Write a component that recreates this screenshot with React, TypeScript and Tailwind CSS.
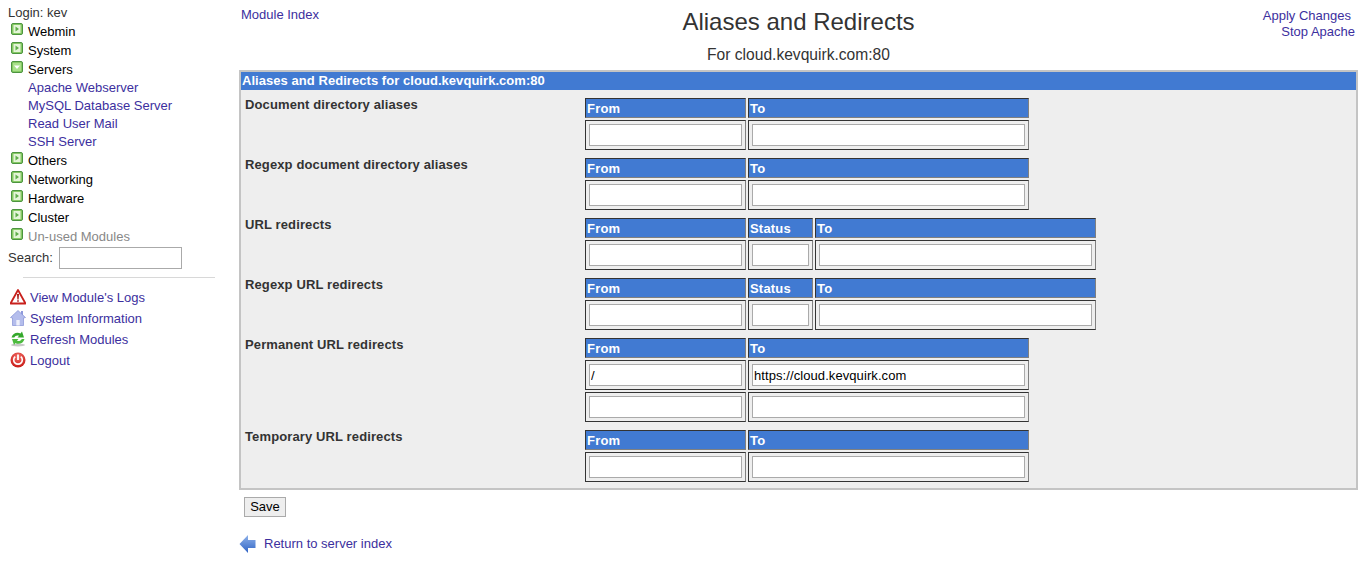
import type { ReactNode } from 'react'

type Section = { label: string; kind: 'pair' | 'triple'; rows: string[][] }

const sections: Section[] = [
  { label: 'Document directory aliases', kind: 'pair', rows: [['', '']] },
  { label: 'Regexp document directory aliases', kind: 'pair', rows: [['', '']] },
  { label: 'URL redirects', kind: 'triple', rows: [['', '', '']] },
  { label: 'Regexp URL redirects', kind: 'triple', rows: [['', '', '']] },
  {
    label: 'Permanent URL redirects',
    kind: 'pair',
    rows: [
      ['/', 'https://cloud.kevquirk.com'],
      ['', ''],
    ],
  },
  { label: 'Temporary URL redirects', kind: 'pair', rows: [['', '']] },
]

const Toggle = ({ open = false }: { open?: boolean }) => (
  <svg className="ml-[11px] mr-[5px] mt-[-6px] shrink-0" width="12" height="12" viewBox="0 0 12 12">
    <rect x="0.5" y="0.5" width="11" height="11" rx="1.5" fill="#86c964" stroke="#4c9440" />
    {open ? (
      <>
        <rect x="2" y="2" width="8" height="8" fill="#a8e08a" />
        <path d="M3 4.5h6L6 8z" fill="#ffffff" />
      </>
    ) : (
      <>
        <rect x="2.5" y="2" width="7" height="8" fill="#e4f5d8" />
        <path d="M4.5 3.5v5L8 6z" fill="#5fae4a" />
      </>
    )}
  </svg>
)

const Category = ({ name, open, muted }: { name: string; open?: boolean; muted?: boolean }) => (
  <div className={`flex h-[19px] items-center ${muted ? 'text-[#888888]' : 'text-black'}`}>
    <Toggle open={open} />
    {name}
  </div>
)

const SubLink = ({ name }: { name: string }) => (
  <a className="block h-[18px] pl-[28px] leading-[18px] text-[#3c2f9e]">{name}</a>
)

const ActionLink = ({ icon, name }: { icon: ReactNode; name: string }) => (
  <a className="flex h-[21px] items-center text-[#3c2f9e]">
    <span className="ml-[10px] mr-[4px] flex h-4 w-4 shrink-0 -translate-y-[1px] items-center justify-center">{icon}</span>
    {name}
  </a>
)

const Sidebar = () => (
  <aside className="w-[239px] shrink-0 pt-[4px] text-[13px] leading-[18px]">
    <div className="h-[18px] pl-[8px] text-[#333333]">Login: kev</div>
    <Category name="Webmin" />
    <Category name="System" />
    <Category name="Servers" open />
    <SubLink name="Apache Webserver" />
    <SubLink name="MySQL Database Server" />
    <SubLink name="Read User Mail" />
    <SubLink name="SSH Server" />
    <Category name="Others" />
    <Category name="Networking" />
    <Category name="Hardware" />
    <Category name="Cluster" />
    <Category name="Un-used Modules" muted />
    <div className="mt-[1px] flex h-[22px] items-center pl-[8px] text-[#333333]">
      Search:
      <input className="ml-[6px] h-[22px] w-[123px] border border-[#aaaaaa] bg-white" />
    </div>
    <hr className="ml-[23px] mt-[8px] w-[192px] border-0 border-t border-[#d8d8d8]" />
    <div className="mt-[9px]">
      <ActionLink
        name="View Module's Logs"
        icon={
          <svg width="16" height="16" viewBox="0 0 16 16">
            <path d="M8 1L15.5 14.5H.5z" fill="#fff" stroke="#c8201c" strokeWidth="1.8" strokeLinejoin="round" />
            <path d="M7 5h2L8.6 10.5H7.4zM7.2 11.2h1.6v1.6H7.2z" fill="#a81a18" />
          </svg>
        }
      />
      <ActionLink
        name="System Information"
        icon={
          <svg width="16" height="16" viewBox="0 0 16 16">
            <rect x="11" y="1" width="2" height="4" fill="#8f9bdc" />
            <path d="M8 .5L15.5 7.5 13.5 8V15.5H2.500V8L.5 7.5z" fill="#b4bdec" stroke="#8491d6" strokeWidth="0.7" />
            <path d="M6.300 15.500V10h3.400v5.500z" fill="#eef0fb" />
          </svg>
        }
      />
      <ActionLink
        name="Refresh Modules"
        icon={
          <svg width="16" height="16" viewBox="0 0 16 16">
            <ellipse cx="8" cy="14" rx="7" ry="1.500" fill="#c8c8c8" />
            <path d="M1.500 6.500C2.500 2 7.500 .5 10.500 2.500L12 .5 14 6.500H7.500L9 4.700C7 4 5 4.700 4.300 6.500z" fill="#35a82c" />
            <path d="M14.500 8C13.500 12.500 8.500 14 5.500 12L4 14 2 8H8.500L7 9.800C9 10.500 11 9.800 11.700 8z" fill="#4cbb3e" />
          </svg>
        }
      />
      <ActionLink
        name="Logout"
        icon={
          <svg width="16" height="16" viewBox="0 0 16 16">
            <defs>
              <radialGradient id="logoutFill" cx="50%" cy="30%" r="75%">
                <stop offset="0%" stopColor="#f4706a" />
                <stop offset="100%" stopColor="#c4140f" />
              </radialGradient>
            </defs>
            <circle cx="8" cy="8" r="7.500" fill="url(#logoutFill)" />
            <path d="M5.200 4.600A4.300 4.300 0 1 0 10.800 4.600" fill="none" stroke="#fff" strokeWidth="1.600" />
            <path d="M8 2.500V8" stroke="#fff" strokeWidth="1.800" />
          </svg>
        }
      />
    </div>
  </aside>
)

const HeaderCell = ({ title }: { title: string }) => (
  <div className="h-[20px] border border-t-[#333333] border-l-[#333333] border-r-[#808080] border-b-[#808080] bg-[#417ad2] pl-[1px] text-[13px] font-bold leading-[19px] tracking-[0.2px] text-white">
    {title}
  </div>
)

const InputCell = ({ value }: { value: string }) => (
  <div className="h-[30px] border border-t-[#333333] border-l-[#333333] border-r-[#808080] border-b-[#333333] bg-[#eeeeee] p-[3px]">
    <input
      readOnly
      value={value}
      className="block h-[22px] w-full border border-[#aaaaaa] bg-white pl-[1px] text-[13px] tracking-[0.08px] text-black"
    />
  </div>
)

const SubTable = ({ section }: { section: Section }) => {
  const isTriple = section.kind === 'triple'
  const titles = isTriple ? ['From', 'Status', 'To'] : ['From', 'To']

  return (
    <div className={`grid gap-[2px] ${isTriple ? 'grid-cols-[161px_65px_281px]' : 'grid-cols-[161px_281px]'}`}>
      {titles.map((title) => (
        <HeaderCell key={title} title={title} />
      ))}
      {section.rows.map((row, rowIndex) =>
        row.map((value, cellIndex) => <InputCell key={`${rowIndex}-${cellIndex}`} value={value} />),
      )}
    </div>
  )
}

export default function App() {
  return (
    <div className="flex min-h-[561px] bg-white font-['Liberation_Sans',Arial,sans-serif] text-[#333333]">
      <Sidebar />
      <main className="min-w-0 flex-1 pr-px text-[13px]">
        <div className="relative h-[70px]">
          <a className="absolute left-[2px] top-[6px] leading-[18px] text-[#3c2f9e]">Module Index</a>
          <div className="absolute right-[3px] top-[8px] text-right leading-[16px] text-[#3c2f9e]">
            <div className="pr-[4px]">Apply Changes</div>
            <div>Stop Apache</div>
          </div>
          <h1 className="pt-[8px] text-center text-[24px] leading-[28px]">Aliases and Redirects</h1>
          <div className="pt-[10px] text-center text-[15.6px] leading-[18px]">For cloud.kevquirk.com:80</div>
        </div>
        <section className="h-[420px] border-2 border-[#c4c4c4] bg-[#eeeeee]">
          <div className="h-[18px] bg-[#417ad2] pl-[1px] text-[13px] font-bold leading-[18px] tracking-[0.05px] text-white">
            Aliases and Redirects for cloud.kevquirk.com:80
          </div>
          <div className="flex flex-col gap-[8px] pt-[8px]">
            {sections.map((section) => (
              <div key={section.label} className="flex">
                <div className="w-[344px] pl-[4px] text-[13px] font-bold leading-[15px] tracking-[0.12px] text-[#333333] -mt-[1px]">
                  {section.label}
                </div>
                <SubTable section={section} />
              </div>
            ))}
          </div>
        </section>
        <button className="ml-[5px] mt-[7px] block h-[20px] w-[42px] border border-[#aaaaaa] bg-[#eeeeee] text-center text-[13px] leading-[18px] text-black">
          Save
        </button>
        <a className="mt-[17px] flex h-[20px] items-center text-[#3c2f9e]">
          <svg className="mr-[8px]" width="17" height="20" viewBox="0 0 17 20">
            <defs>
              <linearGradient id="backFill" x1="0" y1="0" x2="0" y2="1">
                <stop offset="0%" stopColor="#8fb2ea" />
                <stop offset="100%" stopColor="#2f63c4" />
              </linearGradient>
            </defs>
            <path d="M9 1V6H16.500V14H9V19L.5 10z" fill="url(#backFill)" />
          </svg>
          Return to server index
        </a>
      </main>
    </div>
  )
}
